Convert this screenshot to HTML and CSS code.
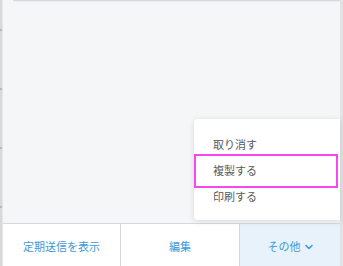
FILE: index.html
```html
<!DOCTYPE html>
<html lang="ja">
<head>
<meta charset="utf-8">
<link rel="stylesheet" href="styles.css">
</head>
<body>
<div class="app">
  <div class="rail">
    <span class="tick"></span><span class="tick"></span><span class="tick"></span><span class="tick"></span>
  </div>
  <div class="main">
    <div class="content">
      <div class="topline"></div>
      <div class="menu">
        <div class="item">取り消す</div>
        <div class="item selected">複製する</div>
        <div class="item">印刷する</div>
      </div>
    </div>
    <div class="toolbar">
      <div class="btn">定期送信を表示</div>
      <div class="btn">編集</div>
      <div class="btn active">その他<svg class="chev" width="8" height="6" viewBox="0 0 8 6"><path d="M1 1.5 L4 4.5 L7 1.5" fill="none" stroke="#3d9ad6" stroke-width="1.6" stroke-linecap="round" stroke-linejoin="round"/></svg></div>
    </div>
  </div>
  <div class="edge"></div>
</div>
</body>
</html>
```
FILE: styles.css
```css
html, body {
  margin: 0;
  padding: 0;
}
body {
  width: 343px;
  height: 266px;
  overflow: hidden;
  background: #f5f6f8;
  font-family: "Noto Sans CJK JP", "Noto Sans", sans-serif;
}
.app {
  display: flex;
  height: 266px;
}
.rail {
  width: 3px;
  background: #d9d9d9;
  border-right: 1px solid #e6e6e6;
  box-sizing: border-box;
  display: flex;
  flex-direction: column;
  padding-top: 29px;
  gap: 57px;
}
.tick {
  display: block;
  height: 2px;
  background: #b9b9b9;
}
.main {
  flex: 1;
  display: flex;
  flex-direction: column;
}
.content {
  flex: 1;
  position: relative;
  background: #f5f6f8;
}
.topline {
  margin-left: 10px;
  height: 1px;
  background: #d8d9dc;
  box-shadow: 0 1px 1px rgba(0,0,0,0.04);
}
.menu {
  position: absolute;
  left: 191px;
  top: 119px;
  width: 146px;
  box-sizing: border-box;
  padding: 12px 0 11px;
  background: #fff;
  border-radius: 4px 0 0 4px;
  box-shadow: 0 1px 6px rgba(0,0,0,0.13);
}
.item {
  position: relative;
  height: 26px;
  line-height: 26px;
  padding-left: 19px;
  font-size: 11px;
  color: #5a5a5a;
}
.item.selected::after {
  content: "";
  position: absolute;
  left: 0;
  right: 2px;
  top: -3px;
  bottom: -5px;
  border: 2px solid #f946f5;
}
.toolbar {
  height: 42px;
  border-top: 1px solid #d8d9dc;
  background: #fff;
  display: grid;
  grid-template-columns: 117px 119px 1fr;
}
.btn {
  display: flex;
  align-items: center;
  justify-content: center;
  gap: 4px;
  font-size: 11px;
  color: #3d9ad6;
  border-left: 1px solid #d8d9dc;
  padding-top: 1px;
}
.btn:first-child {
  border-left: none;
}
.btn.active {
  background: #e7f2fa;
}
.chev {
  display: block;
  margin-top: 2px;
}
.edge {
  width: 3px;
  background: #e2e3e5;
}
```
